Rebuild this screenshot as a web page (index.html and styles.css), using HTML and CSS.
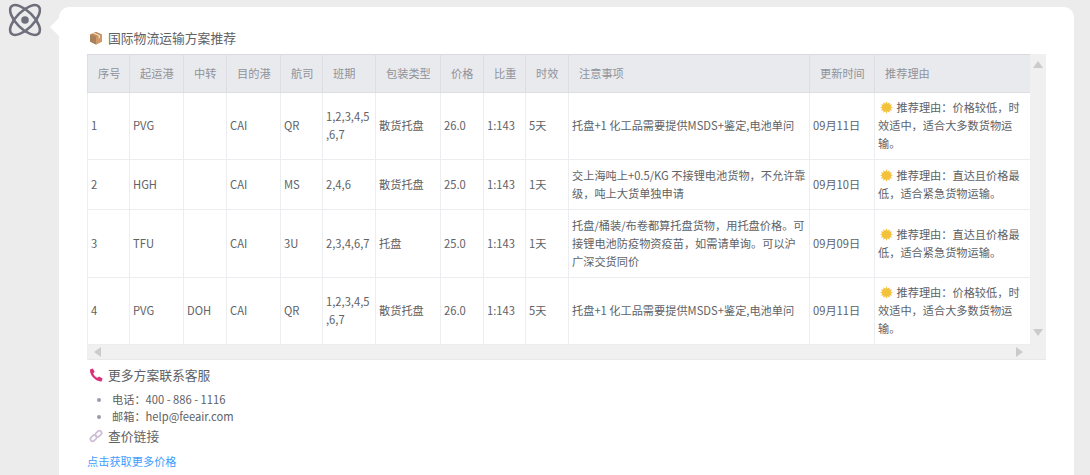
FILE: index.html
```html
<!DOCTYPE html>
<html lang="zh-CN">
<head>
<meta charset="utf-8">
<title>国际物流运输方案推荐</title>
<link rel="stylesheet" href="styles.css">
</head>
<body>
<div class="chat">
  <div class="avatar">
    <svg viewBox="0 0 32 32" width="32" height="32" fill="none" stroke="#6e6e7c" stroke-width="2.6">
      <ellipse cx="16" cy="16" rx="19.2" ry="8.6" transform="rotate(45 16 16)"/>
      <ellipse cx="16" cy="16" rx="19.2" ry="8.6" transform="rotate(-45 16 16)"/>
      <circle cx="16" cy="16" r="3.8" fill="#6e6e7c" stroke="none"/>
    </svg>
  </div>
  <div class="bubble">
    <h3 class="heading">
      <svg class="ico" viewBox="0 0 14 14"><path d="M7 .8 13 3.4V10.4L7 13.4 1 10.4V3.4Z" fill="#c08a5c"/><path d="M1 3.4 7 6V13.4L1 10.4Z" fill="#a9805c"/><path d="M7 6 13 3.4V10.4L7 13.4Z" fill="#cf9a68"/><path d="M3.4 2.2 9.6 4.9V7.6L11 7V4.2L5 1.5Z" fill="#efdcc0"/></svg>
      国际物流运输方案推荐
    </h3>
    <div class="scroller">
      <div class="viewport">
        <table class="plans">
          <colgroup>
            <col class="c1"><col class="c2"><col class="c3"><col class="c4"><col class="c5"><col class="c6"><col class="c7"><col class="c8"><col class="c9"><col class="c10"><col class="c11"><col class="c12"><col class="c13">
          </colgroup>
          <thead>
            <tr><th>序号</th><th>起运港</th><th>中转</th><th>目的港</th><th>航司</th><th>班期</th><th>包装类型</th><th>价格</th><th>比重</th><th>时效</th><th>注意事项</th><th>更新时间</th><th>推荐理由</th></tr>
          </thead>
          <tbody>
            <tr class="r1"><td>1</td><td>PVG</td><td></td><td>CAI</td><td>QR</td><td>1,2,3,4,5,6,7</td><td>散货托盘</td><td>26.0</td><td>1:143</td><td>5天</td><td>托盘+1 化工品需要提供MSDS+鉴定,电池单问</td><td>09月11日</td><td><svg class="sun" viewBox="0 0 14 14"><use href="#sun"/></svg> 推荐理由：价格较低，时效适中，适合大多数货物运输。</td></tr>
            <tr class="r2"><td>2</td><td>HGH</td><td></td><td>CAI</td><td>MS</td><td>2,4,6</td><td>散货托盘</td><td>25.0</td><td>1:143</td><td>1天</td><td>交上海吨上+0.5/KG 不接锂电池货物，不允许靠级，吨上大货单独申请</td><td>09月10日</td><td><svg class="sun" viewBox="0 0 14 14"><use href="#sun"/></svg> 推荐理由：直达且价格最低，适合紧急货物运输。</td></tr>
            <tr class="r3"><td>3</td><td>TFU</td><td></td><td>CAI</td><td>3U</td><td>2,3,4,6,7</td><td>托盘</td><td>25.0</td><td>1:143</td><td>1天</td><td>托盘/桶装/布卷都算托盘货物，用托盘价格。可接锂电池防疫物资疫苗，如需请单询。可以沪广深交货同价</td><td>09月09日</td><td><svg class="sun" viewBox="0 0 14 14"><use href="#sun"/></svg> 推荐理由：直达且价格最低，适合紧急货物运输。</td></tr>
            <tr class="r4"><td>4</td><td>PVG</td><td>DOH</td><td>CAI</td><td>QR</td><td>1,2,3,4,5,6,7</td><td>散货托盘</td><td>26.0</td><td>1:143</td><td>5天</td><td>托盘+1 化工品需要提供MSDS+鉴定,电池单问</td><td>09月11日</td><td><svg class="sun" viewBox="0 0 14 14"><use href="#sun"/></svg> 推荐理由：价格较低，时效适中，适合大多数货物运输。</td></tr>
          </tbody>
        </table>
        <div class="vbar"><span class="tri up"></span><span class="tri down"></span></div>
      </div>
      <div class="hbar"><span class="tri lft"></span><span class="tri rgt"></span></div>
    </div>
    <h3 class="heading">
      <svg class="ico" viewBox="0 0 14 14"><path d="M1 1.4 3.8.4 5.6 3.8 4.2 5.4C4.8 7.2 6.4 9 8.6 9.8L10 8.6 13.6 10.6 12.6 13.4C7.4 14.2.2 7.4 1 1.4Z" fill="#d9307c"/></svg>
      更多方案联系客服
    </h3>
    <ul class="contacts">
      <li>电话：400 - 886 - 1116</li>
      <li>邮箱：help@feeair.com</li>
    </ul>
    <h3 class="heading link-head">
      <svg class="ico" viewBox="0 0 14 14" fill="none" stroke="#cdbfd6" stroke-width="1.7"><rect x="1" y="7" width="7" height="4.4" rx="2.2" transform="rotate(-45 4.5 9.2)"/><rect x="6" y="2.6" width="7" height="4.4" rx="2.2" transform="rotate(-45 9.5 4.8)"/></svg>
      查价链接
    </h3>
    <p class="more"><a href="#">点击获取更多价格</a></p>
  </div>
</div>
<svg class="defs" width="0" height="0"><defs><g id="sun"><path d="M7 .4 8.2 3 10.4 1.4 10.4 4 13 3.6 11.6 5.8 13.8 7 11.6 8.2 13 10.4 10.4 10 10.4 12.6 8.2 11 7 13.6 5.8 11 3.6 12.6 3.6 10 1 10.4 2.4 8.2.2 7 2.4 5.8 1 3.6 3.6 4 3.6 1.4 5.8 3Z" fill="#f3c23c"/></g></defs></svg>
</body>
</html>
```
FILE: styles.css
```css
* { box-sizing: border-box; }
html, body { margin: 0; height: 475px; overflow: hidden; }
body {
  background: #ececec;
  font-family: "Noto Sans CJK SC", "Noto Sans", sans-serif;
  color: #606266;
}
.chat { display: flex; padding: 7px 16px 0 9px; height: 475px; }
.avatar { width: 50px; flex: none; margin-top: -3px; }
.avatar svg { display: block; overflow: visible; }
.bubble {
  position: relative;
  flex: 1;
  background: #fff;
  border-radius: 10px 10px 0 0;
  padding: 21px 28px 0;
}
.bubble::before {
  content: "";
  position: absolute;
  left: -9px;
  top: 11px;
  border: 9px solid transparent;
  border-left: 0;
  border-right-color: #fff;
}
.heading {
  display: flex;
  align-items: center;
  gap: 5px;
  margin: 0;
  padding-left: 2px;
  font-size: 12.8px;
  font-weight: 400;
  line-height: 20px;
  color: #606266;
}
.ico { width: 14px; height: 14px; flex: none; }
.scroller { margin-top: 6px; margin-bottom: 5px; width: 959px; }
.viewport { display: flex; justify-content: space-between; height: 291px; }
.plans {
  table-layout: fixed;
  width: 942px;
  height: 290px;
  flex: none;
  border-collapse: collapse;
  font-size: 11.2px;
  line-height: 18px;
}
.c1 { width: 42px; } .c2 { width: 54px; } .c3 { width: 43px; } .c4 { width: 54px; }
.c5 { width: 42px; } .c6 { width: 53px; } .c7 { width: 65px; } .c8 { width: 43px; }
.c9 { width: 42px; } .c10 { width: 43px; } .c11 { width: 241px; } .c12 { width: 65px; } .c13 { width: 155px; }
.plans th, .plans td {
  border: 1px solid #ebedf0;
  padding: 0 3px 2px;
  word-break: break-all;
  line-break: anywhere;
}
.plans th:last-child, .plans td:last-child { border-right: 0; }
.plans td:last-child { padding-right: 8px; }
.plans th {
  height: 38px;
  background: #e9eaee;
  border-color: #dcdee3;
  color: #909399;
  font-weight: 400;
  text-align: left;
  padding: 0 0 2px 10px;
}
.plans thead th { border-top: 1px solid #d8dadf; }
.plans tr:first-child td { border-top: 0; }
.plans .r1 { height: 67px; } .plans .r2 { height: 50px; } .plans .r3 { height: 68px; } .plans .r4 { height: 67px; }
.sun { width: 13px; height: 13px; vertical-align: -2px; margin: 0 1px 0 2px; }
.vbar { position: relative; width: 16px; background: #f0f0f0; flex: none; }
.hbar { position: relative; height: 15px; background: #f0f0f0; border-bottom: 1px solid #e8e8e8; }
.tri { position: absolute; width: 0; height: 0; border: 5px solid transparent; }
.up { left: 3px; top: 7px; border-top: 0; border-bottom: 7px solid #cbcbcb; }
.down { left: 3px; bottom: 9px; border-bottom: 0; border-top: 7px solid #cbcbcb; }
.lft { left: 7px; top: 2px; border-left: 0; border-right: 7px solid #cbcbcb; }
.rgt { right: 23px; top: 2px; border-right: 0; border-left: 7px solid #cbcbcb; }
.contacts { margin: 6px 0 0; padding: 0 0 0 25px; font-size: 11.2px; line-height: 17px; color: #606266; }
.contacts li::marker { color: #9a9aae; }
.link-head { margin-top: 1px; }
.more { margin: 7px 0 0; font-size: 11.2px; line-height: 17px; }
.more a { color: #409eff; text-decoration: none; }
.defs { position: absolute; }
```
